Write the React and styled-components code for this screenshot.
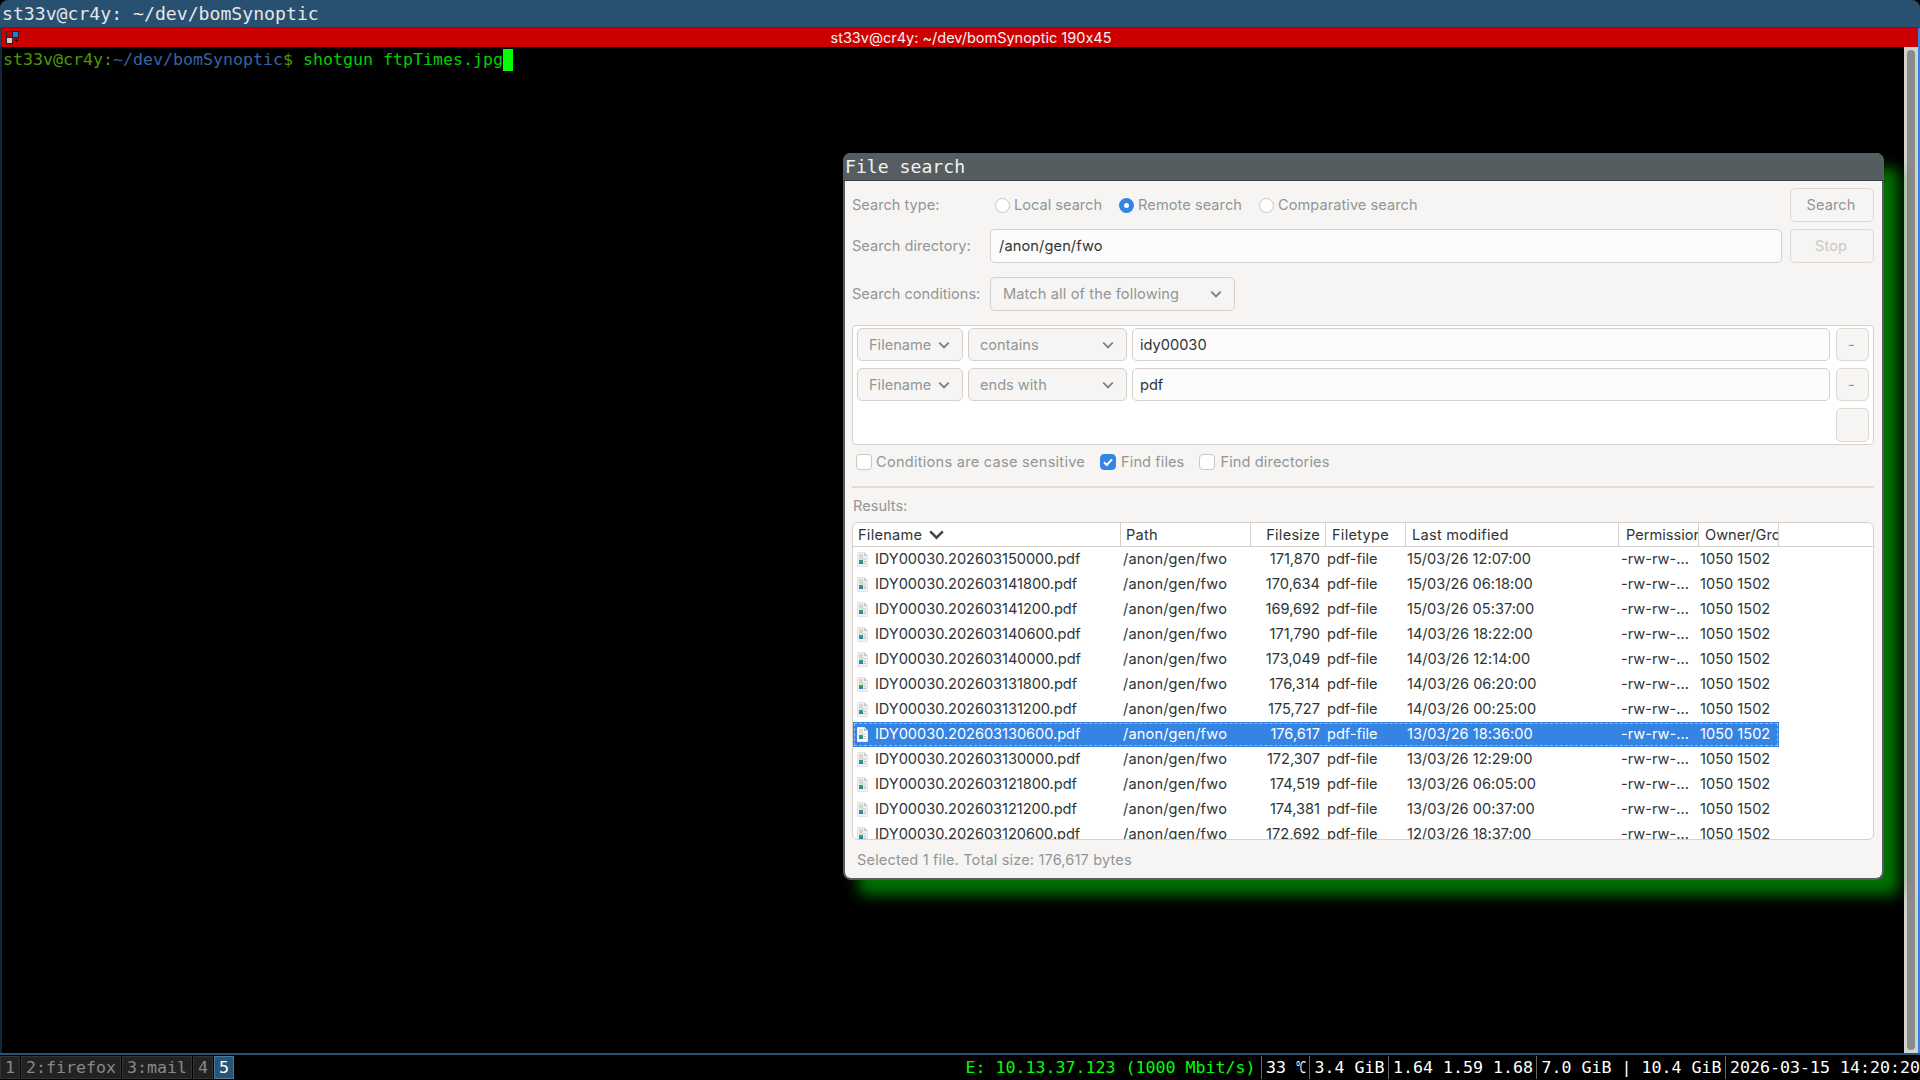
import React from 'react';
import styled, { createGlobalStyle } from 'styled-components';

const Global = createGlobalStyle`
  html, body { margin: 0; padding: 0; background: #000; }
  #root { width: 1920px; height: 1080px; overflow: hidden; }
  * { box-sizing: border-box; }
`;

const MONO = '"DejaVu Sans Mono", monospace';
const UI = 'Inter, "Liberation Sans", sans-serif';

const Desktop = styled.div`
  position: relative;
  width: 1920px;
  height: 1080px;
  background: #000;
  display: flex;
  flex-direction: column;
  overflow: hidden;
`;
const TitleBar = styled.div`
  height: 28px;
  flex: none;
  background: #285070;
  border-bottom: 1px solid #1d3c55;
  border-radius: 8px 8px 0 0;
  color: #e6e6e6;
  font: 18.15px/27px ${MONO};
  padding-left: 2px;
  white-space: pre;
`;
const TabBar = styled.div`
  position: relative;
  height: 19px;
  flex: none;
  background: #cc0000;
  border-left: 2px solid #1d3c55;
  border-right: 2px solid #3584e4;
  color: #f2f2f2;
  font: 14.5px/19px ${UI};
  font-feature-settings: "calt" 0;
  text-align: center;
  padding-left: 22px;
`;
const TabIcon = styled.svg`
  position: absolute;
  left: 4px;
  top: 3px;
`;
const TermRow = styled.div`
  flex: 1;
  display: flex;
  min-height: 0;
  border-left: 2px solid #10293c;
  border-right: 2px solid #3584e4;
`;
const Terminal = styled.div`
  flex: 1;
  background: #000;
  font: 16.62px/22px ${MONO};
  padding: 2px 0 0 1px;
  white-space: pre;
`;
const Seg = styled.span`
  color: ${(p) => p.$c};
`;
const Cursor = styled.span`
  display: inline-block;
  width: 10px;
  height: 22px;
  background: #00ff00;
  vertical-align: top;
`;
const Scroll = styled.div`
  width: 14px;
  flex: none;
  background: #d4d2cf;
  padding: 3px 3px;
  display: flex;
`;
const Thumb = styled.div`
  flex: 1;
  background: #8b8b8b;
  border-radius: 4px;
`;
const BottomBar = styled.div`
  flex: none;
  height: 27px;
  border-top: 2px solid #285577;
  background: #000;
  display: flex;
  justify-content: space-between;
  padding-top: 1px;
  font: 16.62px/23px ${MONO};
`;
const Workspaces = styled.div`
  display: flex;
  gap: 1px;
`;
const Ws = styled.div`
  height: 23px;
  padding: 0 4px;
  line-height: 21px;
  border: 1px solid ${(p) => (p.$on ? '#4c7899' : '#333')};
  background: ${(p) => (p.$on ? '#285577' : '#222')};
  color: ${(p) => (p.$on ? '#fff' : '#888')};
`;
const Status = styled.div`
  display: flex;
  height: 23px;
  color: #fff;
`;
const StatusItem = styled.span`
  padding: 0 ${(p) => (p.$first ? 5 : 3)}px 0 4.5px;
  border-left: ${(p) => (p.$first ? 'none' : '1px solid #666')};
  color: ${(p) => p.$c || '#fff'};
  white-space: pre;
  &:last-child { padding-right: 0; }
`;
const Degree = styled.span`
  display: inline-block;
  width: 10px;
  transform: scaleX(0.6);
  transform-origin: left center;
`;

const Win = styled.div`
  position: absolute;
  left: 843px;
  top: 153px;
  width: 1041px;
  height: 727px;
  border: 2px solid #555d60;
  border-top: none;
  border-radius: 8px;
  background: #f6f5f4;
  box-shadow: 15px 15px 14px #007000;
  display: flex;
  flex-direction: column;
`;
const WinTitle = styled.div`
  height: 28px;
  flex: none;
  margin: 0 -2px;
  padding-left: 2px;
  background: #555d60;
  border-bottom: 1px solid #3a4042;
  border-radius: 8px 8px 0 0;
  color: #f2f2f2;
  font: 18.15px/27px ${MONO};
`;
const Body = styled.div`
  flex: 1;
  min-height: 0;
  padding: 7px 8px 0 7px;
  display: flex;
  flex-direction: column;
  font: 14.6px/20px ${UI};
  font-feature-settings: "calt" 0;
  color: #929595;
`;
const Row = styled.div`
  display: flex;
  align-items: center;
  height: 34px;
  margin-top: ${(p) => p.$mt || 0}px;
  flex: none;
`;
const Label = styled.div`
  width: 138px;
  flex: none;
`;
const Radios = styled.div`
  flex: 1;
  display: flex;
  gap: 17px;
  padding-left: 5px;
`;
const Opt = styled.div`
  display: flex;
  align-items: center;
  gap: ${(p) => p.$gap || 5}px;
  letter-spacing: ${(p) => p.$ls || 0}px;
`;
const RadioDot = styled.span`
  width: 15px;
  height: 15px;
  border-radius: 50%;
  border: ${(p) => (p.$on ? '5px solid #3584e4' : '1px solid #cdc7c2')};
  background: #fff;
`;
const CheckBox = styled.span`
  width: 16px;
  height: 16px;
  border-radius: 4px;
  border: 1px solid ${(p) => (p.$on ? '#3584e4' : '#cdc7c2')};
  background: ${(p) => (p.$on ? '#3584e4' : '#fff')};
  display: flex;
  align-items: center;
  justify-content: center;
`;
const Btn = styled.div`
  flex: none;
  width: ${(p) => p.$w || 84}px;
  height: ${(p) => p.$h || 34}px;
  border: 1px solid #dcd8d4;
  border-radius: 5px;
  background: #f6f5f4;
  display: flex;
  align-items: center;
  justify-content: center;
  padding-right: 2px;
  letter-spacing: 0.1px;
  color: ${(p) => (p.$dim ? '#c8c8c6' : '#929595')};
`;
const Entry = styled.div`
  flex: 1;
  height: ${(p) => p.$h || 34}px;
  border: 1px solid #d5d0cc;
  border-radius: 5px;
  background: #fcfcfc;
  color: #2e3436;
  padding-left: ${(p) => p.$pl || 7}px;
  display: flex;
  align-items: center;
  margin-right: ${(p) => p.$mr || 0}px;
  letter-spacing: ${(p) => p.$ls || 0}px;
`;
const Combo = styled.div`
  flex: none;
  width: ${(p) => p.$w}px;
  height: ${(p) => p.$h || 34}px;
  border: 1px solid #d5d0cc;
  border-radius: 5px;
  background: #f6f5f4;
  padding: 0 11px 0 ${(p) => p.$pl || 11}px;
  display: flex;
  align-items: center;
  justify-content: space-between;
  letter-spacing: ${(p) => p.$ls || 0}px;
`;
const Frame = styled.div`
  flex: none;
  margin-top: 14px;
  height: 120px;
  border: 1px solid #d5d0cc;
  border-radius: 4px;
  background: #fff;
  padding: 2px 4px;
  display: flex;
  flex-direction: column;
  gap: 7px;
`;
const CondRow = styled.div`
  display: flex;
  gap: 5px;
  height: 33px;
`;
const LastRow = styled.div`
  display: flex;
  justify-content: flex-end;
`;
const Checks = styled.div`
  display: flex;
  gap: 15px;
  margin-top: 9px;
  padding-left: 4px;
  height: 16px;
  align-items: center;
  flex: none;
`;
const Sep = styled.div`
  height: 2px;
  flex: none;
  margin-top: 16px;
  background: #dfdcd9;
`;
const ResultsLabel = styled.div`
  flex: none;
  margin-top: 8px;
  height: 20px;
  padding-left: 1px;
`;
const Tree = styled.div`
  flex: none;
  margin-top: 6px;
  height: 318px;
  border: 1px solid #d5d0cc;
  border-radius: 6px;
  background: #fff;
  overflow: hidden;
  color: #2e3436;
`;
const COLS = '268px 130px 75px 80px 213px 80px 80px';
const Head = styled.div`
  display: grid;
  grid-template-columns: ${COLS} 1fr;
  height: 24px;
  border-bottom: 1px solid #d5d0cc;
`;
const HeadCell = styled.div`
  overflow: hidden;
  white-space: nowrap;
  border-right: ${(p) => (p.$last ? 'none' : '1px solid #d5d0cc')};
  padding-left: ${(p) => p.$pl}px;
  padding-right: ${(p) => p.$pr || 0}px;
  text-align: ${(p) => (p.$right ? 'right' : 'left')};
  line-height: 24px;
  letter-spacing: ${(p) => p.$ls ?? 0.25}px;
  display: ${(p) => (p.$sort ? 'flex' : 'block')};
  align-items: center;
  gap: 5px;
`;
const DataRow = styled.div`
  position: relative;
  display: grid;
  grid-template-columns: ${COLS};
  width: 926px;
  height: 25px;
  line-height: 24px;
  background: ${(p) => (p.$sel ? '#3584e4' : 'transparent')};
  color: ${(p) => (p.$sel ? '#fff' : '#2e3436')};
  ${(p) => (p.$sel ? 'outline: 1px dashed rgba(255,255,255,0.45); outline-offset: -2px;' : '')}
`;
const Cell = styled.div`
  overflow: hidden;
  white-space: nowrap;
  padding-left: ${(p) => p.$pl}px;
  padding-right: ${(p) => p.$pr || 0}px;
  text-align: ${(p) => (p.$right ? 'right' : 'left')};
  letter-spacing: ${(p) => p.$ls || 0}px;
`;
const NameCell = styled(Cell)`
  display: flex;
  align-items: center;
  height: 24px;
  gap: 7px;
`;
const StatusText = styled.div`
  flex: none;
  margin-top: 10px;
  padding-left: 5px;
  letter-spacing: 0.14px;
`;
const FileSvg = styled.svg`
  flex: none;
`;

const Chevron = ({ size = 14, color = '#7b7f7f', width = 1.6 }) => (
  <svg width={size} height={size} viewBox="0 0 12 12" fill="none">
    <path d="M2 4l4 4 4-4" stroke={color} strokeWidth={width} />
  </svg>
);

const FileIcon = ({ sel }) => (
  <FileSvg width="11" height="15" viewBox="0 0 11 15">
    <path d="M0.5 0.5H7.5L10.5 3.5V14.5H0.5Z" fill={sel ? '#ffffff' : '#f1f1ef'} stroke={sel ? '#e6edf8' : '#e2e2e0'} />
    <path d="M7 0.5V4H10.5Z" fill={sel ? '#b9bdc2' : '#c6c8c8'} />
    <rect x="2" y="2.5" width="4" height="1" fill="#b8b8b8" />
    <rect x="2" y="4.5" width="4" height="1" fill="#b8b8b8" />
    <rect x="2" y="6.5" width="7" height="1" fill="#c8c8c8" />
    <rect x="2" y="8" width="4" height="2" fill="#2fa84f" />
    <rect x="2" y="10" width="4" height="2" fill="#2a7bd6" />
    <rect x="6.5" y="9" width="2.5" height="1" fill="#c0c0c0" />
    <rect x="6.5" y="11" width="2.5" height="1" fill="#c0c0c0" />
  </FileSvg>
);

const rows = [
  ['IDY00030.202603150000.pdf', '171,870', '15/03/26 12:07:00'],
  ['IDY00030.202603141800.pdf', '170,634', '15/03/26 06:18:00'],
  ['IDY00030.202603141200.pdf', '169,692', '15/03/26 05:37:00'],
  ['IDY00030.202603140600.pdf', '171,790', '14/03/26 18:22:00'],
  ['IDY00030.202603140000.pdf', '173,049', '14/03/26 12:14:00'],
  ['IDY00030.202603131800.pdf', '176,314', '14/03/26 06:20:00'],
  ['IDY00030.202603131200.pdf', '175,727', '14/03/26 00:25:00'],
  ['IDY00030.202603130600.pdf', '176,617', '13/03/26 18:36:00', true],
  ['IDY00030.202603130000.pdf', '172,307', '13/03/26 12:29:00'],
  ['IDY00030.202603121800.pdf', '174,519', '13/03/26 06:05:00'],
  ['IDY00030.202603121200.pdf', '174,381', '13/03/26 00:37:00'],
  ['IDY00030.202603120600.pdf', '172,692', '12/03/26 18:37:00'],
];

export default function App() {
  return (
    <Desktop>
      <Global />
      <TitleBar>st33v@cr4y: ~/dev/bomSynoptic</TitleBar>
      <TabBar>
        <TabIcon width="14" height="14" viewBox="0 0 14 14">
          <rect x="0.5" y="0.5" width="6" height="6" fill="#cc0000" stroke="#222" />
          <rect x="6.5" y="0.5" width="6" height="6" fill="#1f7fd0" stroke="#222" />
          <rect x="0.5" y="6.5" width="6" height="6" fill="#d0d0d0" stroke="#222" />
          <path d="M8 8.5h5l-2.5 2.5z" fill="#111" />
        </TabIcon>
        st33v@cr4y: ~/dev/bomSynoptic 190x45
      </TabBar>
      <TermRow>
        <Terminal>
          <Seg $c="#4e9a06">st33v@cr4y:</Seg>
          <Seg $c="#3465a4">~/dev/bomSynoptic</Seg>
          <Seg $c="#4e9a06">$ </Seg>
          <Seg $c="#00d000">shotgun ftpTimes.jpg</Seg>
          <Cursor />
        </Terminal>
        <Scroll>
          <Thumb />
        </Scroll>
      </TermRow>
      <BottomBar>
        <Workspaces>
          <Ws>1</Ws>
          <Ws>2:firefox</Ws>
          <Ws>3:mail</Ws>
          <Ws>4</Ws>
          <Ws $on>5</Ws>
        </Workspaces>
        <Status>
          <StatusItem $first $c="#00ff00">E: 10.13.37.123 (1000 Mbit/s)</StatusItem>
          <StatusItem>33 <Degree>℃</Degree></StatusItem>
          <StatusItem>3.4 GiB</StatusItem>
          <StatusItem>1.64 1.59 1.68</StatusItem>
          <StatusItem>7.0 GiB | 10.4 GiB</StatusItem>
          <StatusItem>2026-03-15 14:20:20</StatusItem>
        </Status>
      </BottomBar>

      <Win>
        <WinTitle>File search</WinTitle>
        <Body>
          <Row>
            <Label>Search type:</Label>
            <Radios>
              <Opt $gap={4}><RadioDot />Local search</Opt>
              <Opt $gap={4} $ls={0.05}><RadioDot $on />Remote search</Opt>
              <Opt $gap={4} $ls={0.05}><RadioDot />Comparative search</Opt>
            </Radios>
            <Btn>Search</Btn>
          </Row>
          <Row $mt={7}>
            <Label>Search directory:</Label>
            <Entry $mr={8} $pl={8} $ls={0.12}>/anon/gen/fwo</Entry>
            <Btn $dim>Stop</Btn>
          </Row>
          <Row $mt={14}>
            <Label>Search conditions:</Label>
            <Combo $w={245} $pl={12} $ls={0.12}>Match all of the following<Chevron /></Combo>
          </Row>
          <Frame>
            <CondRow>
              <Combo $w={106} $h={33}>Filename<Chevron /></Combo>
              <Combo $w={159} $h={33}>contains<Chevron /></Combo>
              <Entry $h={33} $mr={1}>idy00030</Entry>
              <Btn $w={33} $h={33}>-</Btn>
            </CondRow>
            <CondRow>
              <Combo $w={106} $h={33}>Filename<Chevron /></Combo>
              <Combo $w={159} $h={33}>ends with<Chevron /></Combo>
              <Entry $h={33} $mr={1}>pdf</Entry>
              <Btn $w={33} $h={33}>-</Btn>
            </CondRow>
            <LastRow><Btn $w={33} $h={34} /></LastRow>
          </Frame>
          <Checks>
            <Opt $gap={4} $ls={0.25}><CheckBox />Conditions are case sensitive</Opt>
            <Opt $ls={0.08}>
              <CheckBox $on>
                <svg width="12" height="12" viewBox="0 0 12 12" fill="none">
                  <path d="M2 6.2l2.8 2.8L10 3.4" stroke="#fff" strokeWidth="2" />
                </svg>
              </CheckBox>
              Find files
            </Opt>
            <Opt $ls={0.12}><CheckBox />Find directories</Opt>
          </Checks>
          <Sep />
          <ResultsLabel>Results:</ResultsLabel>
          <Tree>
            <Head>
              <HeadCell $pl={5} $sort>Filename<Chevron size={19} color="#444" width={1.6} /></HeadCell>
              <HeadCell $pl={5}>Path</HeadCell>
              <HeadCell $pl={0} $pr={5} $right>Filesize</HeadCell>
              <HeadCell $pl={6}>Filetype</HeadCell>
              <HeadCell $pl={6}>Last modified</HeadCell>
              <HeadCell $pl={7} $ls={0}>Permissions</HeadCell>
              <HeadCell $pl={6} $ls={0}>Owner/Group</HeadCell>
              <HeadCell $last />
            </Head>
            {rows.map(([name, size, date, sel]) => (
              <DataRow key={name} $sel={sel}>
                <NameCell $pl={4} $ls={-0.05}><FileIcon sel={sel} />{name}</NameCell>
                <Cell $pl={2} $ls={0.15}>/anon/gen/fwo</Cell>
                <Cell $pl={0} $pr={6} $right>{size}</Cell>
                <Cell $pl={1}>pdf-file</Cell>
                <Cell $pl={1}>{date}</Cell>
                <Cell $pl={2}>-rw-rw-...</Cell>
                <Cell $pl={1}>1050 1502</Cell>
              </DataRow>
            ))}
          </Tree>
          <StatusText>Selected 1 file. Total size: 176,617 bytes</StatusText>
        </Body>
      </Win>
    </Desktop>
  );
}
